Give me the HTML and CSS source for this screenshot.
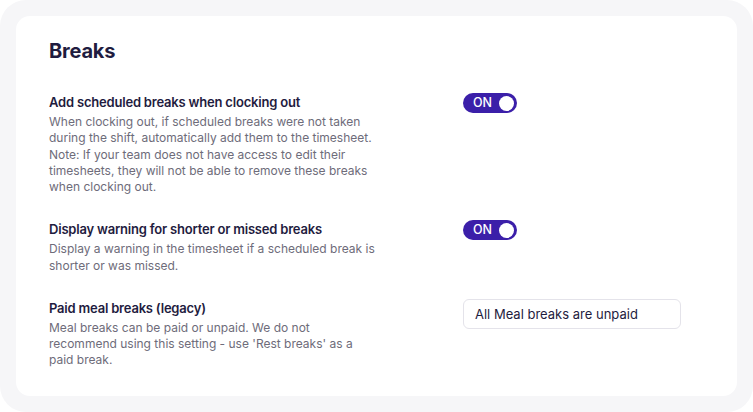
FILE: index.html
```html
<!DOCTYPE html>
<html>
<head>
<meta charset="utf-8">
<link rel="stylesheet" href="styles.css">
</head>
<body>
<div class="frame">
  <div class="card">
    <h1 class="title">Breaks</h1>
    <div class="rows">
      <div class="row">
        <div class="info">
          <div class="label">Add scheduled breaks when clocking out</div>
          <div class="desc">When clocking out, if scheduled breaks were not taken during the shift, automatically add them to the timesheet. Note: If your team does not have access to edit their timesheets, they will not be able to remove these breaks when clocking out.</div>
        </div>
        <div class="control">
          <div class="toggle"><span class="toggle-text">ON</span><span class="knob"></span></div>
        </div>
      </div>
      <div class="row">
        <div class="info">
          <div class="label">Display warning for shorter or missed breaks</div>
          <div class="desc">Display a warning in the timesheet if a scheduled break is shorter or was missed.</div>
        </div>
        <div class="control">
          <div class="toggle"><span class="toggle-text">ON</span><span class="knob"></span></div>
        </div>
      </div>
      <div class="row">
        <div class="info">
          <div class="label">Paid meal breaks (legacy)</div>
          <div class="desc">Meal breaks can be paid or unpaid. We do not recommend using this setting - use 'Rest breaks' as a paid break.</div>
        </div>
        <div class="control">
          <div class="select">All Meal breaks are unpaid</div>
        </div>
      </div>
    </div>
  </div>
</div>
</body>
</html>
```
FILE: styles.css
```css
* { box-sizing: border-box; }
html, body { margin: 0; padding: 0; background: #ffffff; }
body {
  font-family: Inter, "Noto Sans", "Liberation Sans", sans-serif;
  width: 753px;
  height: 412px;
  overflow: hidden;
}
.frame {
  width: 753px;
  height: 412px;
  background: #f6f6f8;
  border-radius: 26px;
  padding: 16px;
}
.card {
  background: #ffffff;
  border-radius: 14px;
  height: 380px;
  width: 721px;
  padding: 23px 33px 0 33px;
}
.title {
  margin: 0;
  font-size: 20px;
  line-height: 24px;
  font-weight: 700;
  color: #1f1c40;
  letter-spacing: -0.2px;
}
.rows {
  margin-top: 30px;
  display: flex;
  flex-direction: column;
  gap: 25px;
}
.row {
  display: grid;
  grid-template-columns: 414px 1fr;
}
.info { width: 328px; }
.label {
  font-size: 13px;
  line-height: 18px;
  font-weight: 600;
  color: #1f1c40;
  letter-spacing: -0.2px;
}
.desc {
  font-size: 12px;
  line-height: 16.25px;
  color: #6e6c7a;
  margin-top: 3px;
}
.toggle {
  width: 54px;
  height: 20px;
  border-radius: 10px;
  background: #3b1fa9;
  display: flex;
  align-items: center;
  justify-content: space-between;
  padding: 0 3px 0 10px;
}
.toggle-text {
  color: #ffffff;
  font-size: 12.5px;
  font-weight: 500;
  line-height: 20px;
}
.knob {
  width: 15px;
  height: 15px;
  border-radius: 50%;
  background: #ffffff;
}
.select {
  margin-top: 0;
  width: 218px;
  height: 30px;
  border: 1px solid #e4e3ea;
  border-radius: 6px;
  font-size: 13px;
  line-height: 28px;
  color: #1f1c40;
  padding-left: 11px;
}
```
